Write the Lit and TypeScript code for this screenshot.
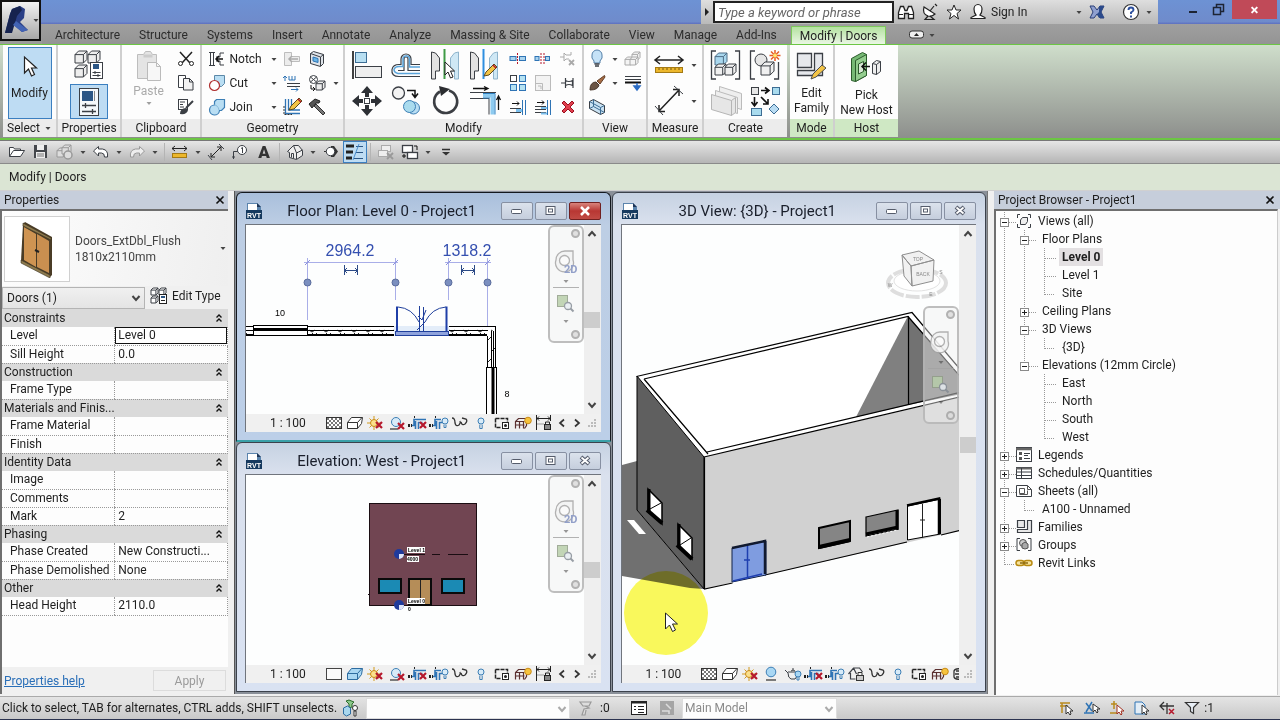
import { LitElement, html, svg, css, nothing } from "lit";
import { customElement, property } from "lit/decorators.js";
import { classMap } from "lit/directives/class-map.js";

/* ---------- icon set ---------- */

const K = "#3b3f45";
const B = "#2f74b5";
const L = "#b9def3";

const redX = (x: number, y: number) => svg`<path d="M${x} ${y}l6 6m0-6l-6 6" stroke="#b5182c" stroke-width="2.2" fill="none"/>`;
const pencil = (x: number, y: number) =>
  svg`<path d="M${x} ${y + 12}l2-4 8-8 3 3-8 8z" fill="#f3c445" stroke="#5a4a20" stroke-width="1"/><path d="M${x + 9} ${y + 1}l3 3" stroke="#b5182c" stroke-width="1.5"/>`;
const cube = (x: number, y: number, s: number, f: string, c = K) =>
  svg`<path d="M${x} ${y + s * 0.3}l${s * 0.3} ${-s * 0.3}h${s * 0.7}v${s * 0.7}l${-s * 0.3} ${s * 0.3}h${-s * 0.7}z" fill=${f} stroke=${c}/><path d="M${x} ${y + s * 0.3}h${s * 0.7}v${s * 0.7}m0 ${-s * 0.7}l${s * 0.3} ${-s * 0.3}" fill="none" stroke=${c}/>`;

const ICONS: Record<string, [number, number, unknown]> = {
  cursor: [14, 22, svg`<path d="M1.500 1v16l4-4 3 7 3-1.500-3-6.500h5z" fill="#fff" stroke="#222" stroke-width="1.200"/>`],
  typeProps: [32, 30, svg`${cube(2, 1, 12, "#eee")}${cube(15, 1, 12, "#eee")}${cube(2, 15, 12, "#eee")}<rect x="17.500" y="12.500" width="12" height="16" fill="#fff" stroke=${K}/><rect x="20" y="14" width="6" height="5" fill="#2c5685"/><path d="M19.500 22.500h8M19.500 25.500h8M22 21v3M25 24v3" stroke=${K}/>`],
  props: [22, 30, svg`<rect x="1.500" y="1.500" width="19" height="27" fill="#f5f8fb" stroke=${K}/><rect x="4" y="4" width="11" height="10" fill="#2c5685"/><path d="M16.500 4v10" stroke="#888"/><path d="M4 18.500h14M4 24.500h14M7.500 16v5M14.500 22v5" stroke=${K} stroke-width="1.300"/>`],
  paste: [28, 32, svg`<path d="M2.500 4.500h6l2-3h5l2 3h4v24h-19z" fill="#e4e4e4" stroke="#bdbdbd"/><path d="M8.500 4.500h9v3h-9z" fill="#ccc"/><path d="M12.500 12.500h9l4 4v14h-13z" fill="#f7f7f7" stroke="#bbb"/><path d="M21.500 12.500v4h4" fill="none" stroke="#bbb"/>`],
  cut: [18, 16, svg`<path d="M3 1l10 11M15 1L5 12" stroke="#222" stroke-width="1.500"/><circle cx="3.500" cy="12.500" r="2" fill="#fff" stroke="#222"/><circle cx="14.500" cy="12.500" r="2" fill="#fff" stroke="#222"/>`],
  copy: [18, 16, svg`<path d="M1.500.5h7v12h-7z" fill="#fff" stroke=${K}/><path d="M6.500 3.500h6l3.500 3.500v8h-9.500z" fill="#f2f2f2" stroke=${K}/><path d="M12.500 3.500v3.500h3.500" fill="none" stroke=${K}/>`],
  matchType: [18, 16, svg`<rect x="1.500" y=".5" width="9" height="10" fill="#fff" stroke=${K}/><path d="M3 3h5M3 5.500h3M3 8h4" stroke=${K}/><path d="M16 2L9 9" stroke=${K} stroke-width="2"/><path d="M3 15q0-6 6-6l2 2q-1 5-8 4z" fill=${K}/>`],
  notch: [18, 16, svg`<path d="M1 1.500h6M1 14.500h6M2.500 2v12M5.500 2v12" stroke=${K} fill="none"/><path d="M16 2h-4v4H8m0 4h4v4h4" stroke=${K} fill="none"/><path d="M15 8H8m3-3L8 8l3 3" stroke="#111" stroke-width="1.500" fill="none"/>`],
  cutGeo: [18, 18, svg`<path d="M6.500 1.500h10v8l-3 3h-7z" fill=${L} stroke="#5b88a8"/><circle cx="6.500" cy="11.500" r="5" fill="#fff" stroke="#b03030" stroke-width="1.200"/>`],
  join: [18, 18, svg`<path d="M6.500 3.500l2-2h8v8l-3 3h-2a5 5 0 1 1-5-5.500z" fill=${L} stroke="#3d7fb5" stroke-width="1.200"/><path d="M11 12q-1-5-5-5" stroke="#8bbbd9" fill="none"/>`],
  cope: [18, 16, svg`<path d="M1.500 1.500h7v4h8v5h-8v4h-7z" fill="#ececec" stroke="#bdbdbd"/><path d="M15 8H6m3-3L6 8l3 3" stroke="#aaa" fill="none" stroke-width="1.500"/>`],
  face: [18, 16, svg`<path d="M2.500 2.500l3-2 10 3v9l-3 3-10-3z" fill="#dfe4ea" stroke=${K}/><path d="M12.500 6v9M2.500 2.500l10 3.500 3-2.500" fill="none" stroke=${K}/><path d="M5 6l5 1.500v4L5 10z" fill="#69b5e6" stroke=${B}/>`],
  beam: [18, 16, svg`<path d="M2 1v5M0 3l2-2 2 2" stroke=${B} fill="none"/><path d="M6 1v4h6V1M9 1v4" stroke=${B} fill="none"/><path d="M4 8.500h13M4 11.500h13" stroke=${K}/><path d="M8 14.500h7m-2-2l2 2-2 2" stroke=${B} fill="none"/>`],
  split: [18, 16, svg`<circle cx="5.500" cy="4.500" r="4" fill="#fff" stroke=${K}/><path d="M2.500 2l6 5m0-5l-6 5" stroke=${K}/><path d="M3 10v4h4m-2-2l2 2-2 2" stroke="#111" fill="none"/>${cube(8, 6, 9, "#eee")}`],
  wallJoin: [18, 18, svg`<path d="M2.500 1v14.500H17M5.500 1v11H17M8.500 1v8" stroke=${B} fill="none" stroke-width="1.300"/><path d="M1 8v8.500h8" stroke="#333" fill="none" stroke-dasharray="2 1"/>${pencil(6, 0)}`],
  hammer: [18, 18, svg`<path d="M8 6l9 9-2 2-9-9z" fill="#777" stroke="#333"/><path d="M1 6l6-5 5 2-1 2-3 0-4 5z" fill="#555" stroke="#222"/>`],
  align: [30, 30, svg`<path d="M1 1v28" stroke="#111" stroke-width="1.600"/><rect x="3.500" y="2.500" width="11" height="10" fill="#b8dff2" stroke="#3d6d94"/><rect x="3.500" y="16.500" width="26" height="11" fill="#eee" stroke=${K}/>`],
  offset: [32, 28, svg`<path d="M30 25.500H9q-8 0-7-7 1-5 7-5h2V8a5 5 0 0 1 10 0v5.500h9" fill="none" stroke=${K} stroke-width="1.200"/><path d="M30 19.500H18V8a2 2 0 0 0-4 0v11.500H8" fill="none" stroke=${K} stroke-width="1.200"/><path d="M30 22.500H8q-4-1-4-4 1-3 5-3h4V7a3.500 3.500 0 0 1 6.500 0v9H30" fill="none" stroke="#5aa4da" stroke-width="1.500"/>`],
  mirrorPick: [30, 32, svg`<path d="M1.500 3l4 1 4 5v13h-4v8h-4z" fill="#e2e2e2" stroke=${K}/><path d="M28.500 3l-4 1-4 5v13h4v8h4z" fill="#cfe8f5" stroke="#8fb4cc"/><path d="M14.500 0v30" stroke="#3f9b46" stroke-width="2"/><path d="M15 13v13l3-3 2.500 6 2.500-1-2.500-6h4z" fill="#fff" stroke="#222"/>`],
  mirrorDraw: [30, 32, svg`<path d="M1.500 3l4 1 4 5v13h-4v8h-4z" fill="#e2e2e2" stroke=${K}/><path d="M28.500 3l-4 1-4 5v13h4v8h4z" fill="#cfe8f5" stroke="#8fb4cc"/><path d="M14.500 0v30" stroke="#2f8fe0" stroke-width="2"/>${pencil(15, 15)}`],
  move: [30, 30, svg`<path d="M15 0l6 7h-4v4h-4V7H9zM15 30l6-7h-4v-4h-4v4H9zM0 15l7-6v4h4v4H7v4zM30 15l-7-6v4h-4v4h4v4z" fill="#2e3136"/><rect x="12.500" y="12.500" width="5" height="5" fill="#fff" stroke=${K}/>`],
  copyObj: [30, 30, svg`<circle cx="7.500" cy="7" r="6" fill="#f3f3f3" stroke=${K} stroke-width="1.300"/><path d="M16 4.500h8v6m-3-3l3 4 3-4" stroke="#111" stroke-width="1.500" fill="none"/><circle cx="22.500" cy="22" r="6" fill=${L} stroke="#3d7fb5"/><circle cx="18.500" cy="20.500" r="6" fill="#a9dbee" stroke="#3d7fb5"/>`],
  rotate: [30, 30, svg`<path d="M10 5.500a11.500 11.500 0 1 0 9-1" fill="none" stroke="#3b3e43" stroke-width="2.600"/><path d="M9 0l11 3-9 7z" fill="#2b2d30"/>`],
  trim: [30, 30, svg`<path d="M1 6.500h26M1 12.500h19v16" fill="none" stroke=${K}/><path d="M14 9.500h9.500v19" fill="none" stroke="#8ecbf0" stroke-width="4"/><path d="M14 7.500h12v21M14 12h7" stroke="#2f82c4" fill="none"/><path d="M4 2.500h14m-3-2l4 2-4 2M29.500 24V11m-2 3l2-4 2 4" stroke="#111" fill="none" stroke-width="1.300"/>`],
  splitEl: [18, 12, svg`<rect x="1" y="3.500" width="6" height="4" fill="#a9d3ee" stroke=${B}/><rect x="10.500" y="3.500" width="6" height="4" fill="#a9d3ee" stroke=${B}/><path d="M8.500 0v12" stroke="#b5182c" stroke-dasharray="2 1"/>`],
  splitGap: [18, 12, svg`<rect x="1" y="3.500" width="4" height="4" fill="#a9d3ee" stroke=${B}/><rect x="11.500" y="3.500" width="4" height="4" fill="#a9d3ee" stroke=${B}/><path d="M7 0v12M10 0v12" stroke="#b5182c" stroke-dasharray="2 1"/>`],
  unpin: [18, 16, svg`<path d="M1 6h4V2l2 2h5V1M5 6v4l2-2h3" stroke="#aaa" fill="none"/><path d="M10 9l5 5m0-5l-5 5" stroke="#aaa" stroke-width="1.800"/>`],
  array: [18, 18, svg`<rect x="1.500" y="1.500" width="6" height="6" fill="#fff" stroke=${K}/><rect x="10.500" y="1.500" width="6" height="6" fill="#b5e2f2" stroke=${B}/><rect x="1.500" y="10.500" width="6" height="6" fill="#b5e2f2" stroke=${B}/><rect x="10.500" y="10.500" width="6" height="6" fill="#b5e2f2" stroke=${B}/>`],
  scale: [18, 18, svg`<rect x="1.500" y="1.500" width="15" height="15" fill="#f3f3f3" stroke="#bbb"/><path d="M1.500 9.500h7v7M4 12h3v3" fill="none" stroke="#bbb"/>`],
  pin: [16, 12, svg`<path d="M1 6h4.500M5.500 1v10M5.500 3.500q3.500 2 7 0v5q-3.500-2-7 0M13 1v10" stroke=${K} fill="none" stroke-width="1.200"/>`],
  trimOne: [18, 16, svg`<path d="M1 9.500h11M1 13.500h11" stroke=${K}/><path d="M7 11.500h6" stroke="#7cc0ee" stroke-width="3"/><path d="M13.500 1v15M16.500 1v15" stroke=${B}/><path d="M3 4.500h7m-2-2l2 2-2 2" stroke="#111" fill="none"/>`],
  trimMany: [18, 16, svg`<path d="M1 7.500h11M1 10.500h11M1 13.500h11" stroke=${K}/><path d="M7 9h6M7 14.500h6" stroke="#7cc0ee" stroke-width="2"/><path d="M13.500 1v15M16.500 1v15" stroke=${B}/><path d="M3 3.500h7m-2-2l2 2-2 2" stroke="#111" fill="none"/>`],
  del: [16, 16, svg`<path d="M2 4l2-2 4 4 4-4 2 2-4 4 4 4-2 2-4-4-4 4-2-2 4-4z" fill="#e0404f" stroke="#9c1020"/>`],
  bulb: [14, 18, svg`<path d="M4 11q-3-3-2-6a5 5 0 0 1 10 0q1 3-2 6v2H4z" fill="#c5e2f7" stroke="#5580a8"/><path d="M4.500 14h5M5 16h4" stroke=${K} stroke-width="1.400"/>`],
  ghost: [18, 16, svg`${cube(1, 6, 8, "#f4f4f4", "#aaa")}${cube(8, 1, 8, "#f4f4f4", "#aaa")}${cube(6, 6, 8, "#f4f4f4", "#aaa")}`],
  brush: [18, 16, svg`<path d="M16.500.5L9 6l3 3 5-7z" fill="#a86c43" stroke="#63402a"/><path d="M2 15q0-8 6-8l3 3q-1 5-9 5z" fill="#6b5444" stroke="#4a372c"/>`],
  linework: [18, 16, svg`<path d="M1 1.500h16M1 4.500h16" stroke=${K} stroke-width="1.200"/><path d="M1 7.500h16" stroke="#111" stroke-width="2"/><path d="M13 8v5m-3-2l3 4 3-4z" fill="#2b6cc4" stroke="#2b6cc4" stroke-width="1.500"/>`],
  selBox: [18, 18, svg`<path d="M1.500 3.500l4-2 11 6v7l-4 2-11-6z" fill="#c9e2f3" stroke=${K}/><path d="M1.500 3.500l11 6v7M12.500 9.500l4-2M5.500 1.500v7l11 6M5.500 8.500l-4 2" fill="none" stroke="#3d6d94"/>`],
  measure: [30, 20, svg`<path d="M1 5h28M6 1L1 5l5 4M24 1l5 4-5 4" stroke="#222" fill="none" stroke-width="1.500"/><rect x="1.500" y="12.500" width="27" height="5" fill="#ecb72c" stroke="#a47a14"/><path d="M5 13v2M9 13v2M13 13v2M17 13v2M21 13v2M25 13v2" stroke="#76570f"/>`],
  aligned: [30, 32, svg`<path d="M5 26L25 5M5 20v6.500h6M25 11V4.500h-6" stroke="#222" fill="none" stroke-width="1.500"/><path d="M1 21l8 9M20 1l9 8" stroke=${K}/>`],
  assembly: [32, 30, svg`<path d="M6 1H1.500v28H6M25 1h4.500v28H25" fill="none" stroke=${K} stroke-width="1.300"/>${cube(5, 3, 12, "#a9d7ee", "#4f6f88")}${cube(5, 14, 11, "#f0f0f0")}${cube(15, 14, 11, "#f0f0f0")}`],
  group: [32, 30, svg`<path d="M6 1H1.500v28H6M25 29h4.500V12" fill="none" stroke=${K} stroke-width="1.300"/><circle cx="12" cy="10" r="6" fill="#e6e6e6" stroke=${K}/>${cube(12, 12, 13, "#f0f0f0")}<path d="M26 0v11M20.500 5.500h11M22 1.500l8 8m0-8l-8 8" stroke="#e85c24" stroke-width="1.500"/><circle cx="26" cy="5.500" r="2" fill="#ffe36b"/>`],
  parts: [32, 32, svg`<path d="M9.500 1.500l22 7v16l-22-7z" fill="#eee" stroke="#bbb"/><path d="M5.500 5.500l22 7v16l-22-7z" fill="#eee" stroke="#bbb"/><path d="M1.500 9.500l20 6 4-3v15l-4 3-20-6z" fill="#e6e6e6" stroke="#b5b5b5"/><path d="M21.500 15.500v15" stroke="#b5b5b5"/>`],
  similar: [30, 32, svg`<rect x="1.500" y="2.500" width="7" height="7" fill="#e6e6e6" stroke=${K}/><rect x="22.500" y="2.500" width="7" height="7" fill="#a9dbee" stroke="#3d6d94"/><rect x="1.500" y="23.500" width="10" height="7" fill="#a9dbee" stroke="#3d6d94"/><path d="M24 19l5 5-5 5-5-5z" fill="#b9dcf3" stroke="#3d6d94"/><path d="M11 5.500h7m-3-3l4 3-4 3M4.500 12v8m-3-3l3 4 3-4M11 12l7 7m0-5v5h-5" stroke="#111" fill="none" stroke-width="1.600"/>`],
  editFamily: [32, 30, svg`<path d="M1.500 2.500h14v14h-14zM18.500 2.500h8v22h-25v-5h17z" fill="#e6e8ec" stroke=${K} stroke-width="1.300"/><path d="M15 28l2-5 9-9 4 3-10 9z" fill="#f3c445" stroke="#4f4f4f"/>`],
  pickHost: [32, 32, svg`<path d="M1.500 7.500l11-6 4 2v21l-11 6-4-1z" fill="#76b974" stroke="#2c5c2c"/><path d="M5.500 9.500l11-6v21l-11 6z" fill="#93cd8e" stroke="#2c5c2c"/><path d="M8.500 13l5-2.500v10L8.500 23z" fill="#d9e8d6" stroke="#2c5c2c"/><path d="M20 15.500h-8m4-4l-4 4 4 4" stroke="#111" stroke-width="1.500" fill="none"/><path d="M22.500 12.500l4-3 4 1v10l-4 3-4-1z" fill="#eee" stroke=${K}/><path d="M26.500 13.500v10m0-10l4-3m-4 3l-4-1" stroke=${K} fill="none"/>`],
  open: [18, 14, svg`<path d="M1.500 11.500v-9h4l1 1.500h6v2" fill="#fff" stroke=${K}/><path d="M1.500 11.500l4-6h11l-4 6z" fill="#fff" stroke=${K}/>`],
  save: [16, 16, svg`<rect x="1" y="1" width="13" height="13" fill="#44474c"/><rect x="4" y="1" width="7" height="5" fill="#eee"/><rect x="3" y="8" width="9" height="6" fill="#eee"/><path d="M4 10h7M4 12h7" stroke="#777"/>`],
  sync: [18, 16, svg`${cube(1, 4, 9, "#ddd", "#999")}${cube(6, 1, 9, "#ddd", "#999")}<circle cx="12" cy="11" r="4" fill="#ddd" stroke="#999" stroke-width="1.500"/>`],
  undo: [18, 14, svg`<path d="M1.500 6l5-4.500v2.500h4q6 1 5 8h-3q0-4-3-4h-3v3z" fill="#fff" stroke=${K}/>`],
  redo: [18, 14, svg`<path d="M16.500 6l-5-4.500v2.500h-4q-6 1-5 8h3q0-4 3-4h3v3z" fill="#eee" stroke="#999"/>`],
  measureS: [18, 14, svg`<path d="M1 3.500h15M4 1L1 3.500 4 6M13 1l3 2.500L13 6" stroke="#222" fill="none"/><rect x="1.500" y="8.500" width="14" height="4" fill="#ecb72c" stroke="#a47a14"/>`],
  alignedS: [18, 16, svg`<path d="M4 13L14 3M4 9v4h4M14 7V3h-4" stroke="#222" fill="none"/><path d="M1 11l4 5M12 0l5 5" stroke=${K}/>`],
  tag: [18, 16, svg`<path d="M2.500 15V7.500h5M1 13h3" stroke=${K} fill="none"/><circle cx="11" cy="6" r="4.500" fill="#fff" stroke=${K}/><path d="M10 4.500l1.500-1v5.500" stroke=${K} fill="none"/>`],
  house: [18, 16, svg`<path d="M1.500 7.500l6-6h5l4 5v5l-6 4-7-2v-5z" fill="#eee" stroke=${K}/><path d="M10.500 15V9l6-3M10.500 9l-3-7.500M5.500 13.500v-4h2v4.500" fill="none" stroke=${K}/>`],
  section: [16, 14, svg`<path d="M8 1h3l4 5.500L11 12H8z" fill="#333"/><path d="M1 6.500h3" stroke="#333"/><circle cx="7.500" cy="6.500" r="4.200" fill="#fff" stroke=${K}/>`],
  thin: [20, 18, svg`<path d="M1 3h8M1 9h7M1 15h6" stroke="#222" stroke-width="3"/><path d="M11 3.500h7M11 9.500h7M9 15.500h9" stroke="#2c5685"/><path d="M14 1L8 17" stroke="#4a8fd0"/>`],
  closeHid: [18, 16, svg`<rect x="4.500" y="1.500" width="9" height="6" fill="#eee" stroke="#aaa"/><rect x="1.500" y="6.500" width="9" height="6" fill="#eee" stroke="#aaa"/><path d="M10 9l6 6m0-6l-6 6" stroke="#999" stroke-width="1.800"/>`],
  switchW: [18, 16, svg`<rect x="1.500" y="1.500" width="10" height="7" fill="#fff" stroke=${K} stroke-width="1.300"/><rect x="6.500" y="8.500" width="10" height="6" fill="#fff" stroke=${K} stroke-width="1.300"/><path d="M1 12h4m-2-2v4M13 2h3v4" stroke="#111" fill="none"/>`],
  binoc: [18, 16, svg`<path d="M1.500 14.500v-6l2-6h3l1.500 4h2l1.500-4h3l2 6v6h-5v-5h-4v5z" fill="#fff" stroke="#222" stroke-width="1.300"/><path d="M2 10.500h4M11 10.500h5" stroke="#222"/>`],
  dish: [16, 18, svg`<path d="M2 4q-2 7 4 9 4 1 7-2z" fill="#fff" stroke="#222" stroke-width="1.200"/><path d="M8 8l4-5m1-2l2 2M6 13l-3 3.500h9L8 13" fill="none" stroke="#222" stroke-width="1.200"/>`],
  star: [16, 16, svg`<path d="M8 1l2 5h5l-4 3.500 1.500 5.500L8 11.500 3.500 15 5 9.500 1 6h5z" fill="#fff" stroke="#222"/>`],
  person: [18, 18, svg`<path d="M5 6a4 4.500 0 0 1 8 0q0 4-2 6l5 2.500v1H2v-1L7 12Q5 10 5 6z" fill="#fff" stroke="#222" stroke-width="1.200"/>`],
  exch: [16, 16, svg`<path d="M1 2h4l3 4 3-4h4l-3 6 3 6h-4l-3-4-3 4H1l3-6z" fill="#8fa0d0" stroke="#2b3f78"/><path d="M10 2h5l-3 6 3 6h-5l-2-4 2-2z" fill="#2b4a8b"/>`],
  help: [18, 18, svg`<circle cx="9" cy="9" r="7.500" fill="#fff" stroke="#333" stroke-width="1.200"/><path d="M6.500 7q0-2.500 2.500-2.500T11.500 7Q11.500 8 9 9.500V11M9 12.500v2" stroke="#2c4f9e" stroke-width="1.900" fill="none"/>`],
  hatch: [18, 14, svg`<defs><pattern id="ck" width="4" height="4" patternUnits="userSpaceOnUse"><path d="M0 0h2v2H0zM2 2h2v2H2z" fill="#777"/></pattern></defs><rect x="1.500" y="1.500" width="15" height="11" fill="#fff"/><rect x="1.500" y="1.500" width="15" height="11" fill="url(#ck)" stroke="#333"/>`],
  blank: [18, 14, svg`<rect x="1.500" y="1.500" width="15" height="11" fill="#fafafa" stroke="#444"/>`],
  box: [18, 14, svg`<path d="M1.500 6.500l4-5h11l-1 6-4 5h-10z" fill="#fff" stroke="#333"/><path d="M1.500 6.500h10v6m0-6l4.500-5" fill="none" stroke="#333"/>`],
  boxBlue: [18, 14, svg`<path d="M1.500 6.500l4-5h11l-1 6-4 5h-10z" fill="#a9d7f3" stroke="#2d6ca0"/><path d="M1.500 6.500h10v6m0-6l4.500-5" fill="none" stroke="#2d6ca0"/>`],
  sun: [18, 14, svg`<path d="M7 0v14M0 7h13M2.500 2.500l9 9m0-9l-9 9" stroke="#d29a1d"/><circle cx="7" cy="7" r="3.500" fill="#fbe08b" stroke="#c98a18"/>${redX(9, 6)}`],
  shadowX: [18, 14, svg`<circle cx="8" cy="6" r="4.500" fill="#d8ebf8" stroke="#3d7fb5"/><path d="M2 13h8" stroke="#555" stroke-width="1.500"/>${redX(10, 7)}`],
  shadow: [18, 16, svg`<circle cx="8" cy="6" r="4.800" fill="#a9d7f3" stroke="#3d7fb5"/><path d="M3 14h10" stroke="#555" stroke-width="1.500"/>`],
  teapot: [18, 14, svg`<path d="M1 3l3 3q0 5 3 6h4q3-2 2-7H4M7 4q2-2 4 0M9 1v2" fill="none" stroke=${K}/><circle cx="14" cy="7" r="3" fill="#a9d7f3" stroke="#3d7fb5"/><path d="M13 10v3h2v-3" stroke="#3d7fb5" fill="none"/>`],
  cropX: [20, 14, svg`<path d="M3 9.500h3V3.500h12M10.500 13V6.500h4M7.500 13V5" stroke=${B} fill="none" stroke-width="1.600"/><path d="M0 8h2v3H0zM3 8h1v3H3zM6 0h1v2H6z" fill="#222"/>${redX(12, 6)}`],
  crop: [20, 14, svg`<path d="M3 9.500h3V3.500h6M10.500 13V6.500h3M7.500 13V5" stroke=${B} fill="none" stroke-width="1.600"/><path d="M0 8h2v3H0zM3 8h1v3H3zM6 0h1v2H6z" fill="#222"/><circle cx="16" cy="5" r="3" fill="#d8ebf8" stroke="#3d7fb5"/><path d="M15 8.500v3h2v-3" stroke="#3d7fb5" fill="none"/>`],
  lockHouse: [18, 16, svg`<path d="M1.500 8l5-6 6 0 3 4M3.500 7v6h5M6.500 2l3 6" stroke=${K} fill="none" stroke-width="1.200"/><rect x="9.500" y="9.500" width="7" height="5" fill="#ccc" stroke="#333"/><path d="M11 9V6.500h4V9" fill="none" stroke="#333"/>`],
  glasses: [18, 14, svg`<path d="M1 2q3 0 3 5 1 4 4 2 2-2 1-4M10 6q1 4 4 2 3-3 1-5l-4-1" fill="none" stroke="#333" stroke-width="1.300"/>`],
  bulbS: [12, 14, svg`<circle cx="6" cy="5" r="3" fill="#d8ebf8" stroke="#3d7fb5"/><path d="M4.800 8.500v4h2.400v-4" stroke="#3d7fb5" fill="none"/>`],
  frame: [18, 14, svg`<path d="M2.500 2.500h12v4M2.500 2.500v9h5" stroke="#222" fill="none" stroke-width="1.500" stroke-dasharray="4 1"/><rect x="9.500" y="6.500" width="6" height="6" fill="#fff" stroke="#222"/><circle cx="12.500" cy="9.500" r="1.500" fill="#222"/>`],
  gridSun: [18, 14, svg`<path d="M1.500 12.500V5.500l3-3h8v7l-2 3M5.500 12.500V5.500M9.500 12.500V5.500M1.500 5.500h9M1.500 9h9" stroke="#5a3030" fill="none" stroke-width="1.200"/><circle cx="14" cy="4.500" r="3.300" fill="#f6c33c" stroke="#c98a18"/>`],
  dimLock: [18, 16, svg`<path d="M1.500 0v15M15.500 0v6M2 3.500h13M4 1.500l-2 2 2 2M13 1.500l2 2-2 2" stroke="#222" fill="none"/><path d="M2 9h7" stroke="#999"/><rect x="9.500" y="9.500" width="6" height="5" fill="#888" stroke="#222"/><path d="M10.500 9V7h4v2" fill="none" stroke="#222"/>`],
  partial: [18, 14, svg`<path d="M9 2q-6-1-7 2v6q1 3 7 2M3 7h6M4 4h5M4 10h5" fill="none" stroke="#333" stroke-width="1.300"/>`],
  rvt: [18, 18, svg`<path d="M2 1h10l4 4v12H2z" fill="#5b84ad"/><path d="M3 2h9v6H3z" fill="#fff"/><path d="M12 1v4h4z" fill="#1d3557"/><rect x="1" y="8" width="16" height="9" fill="#163a5f"/><text x="9" y="15.500" text-anchor="middle" font-size="7" font-weight="700" font-family="Liberation Sans" fill="#fff">RVT</text>`],
  min: [14, 12, svg`<rect x="1.500" y="4.500" width="10" height="4" rx="1" fill="#fff" stroke="#555c6b"/>`],
  max: [14, 12, svg`<rect x="2" y="1.500" width="9" height="8" fill="#fff" stroke="#555c6b"/><rect x="4.500" y="4" width="4" height="3" fill="#fff" stroke="#555c6b"/>`],
  closeW: [14, 12, svg`<path d="M3 2l8 7m0-7l-8 7" stroke="#555c6b" stroke-width="4"/><path d="M3.500 2.500l7 6m0-6l-7 6" stroke="#fff" stroke-width="1.800"/>`],
  closeRed: [14, 12, svg`<path d="M3 2l8 8m0-8l-8 8" stroke="#fff" stroke-width="2.500"/>`],
  wheel: [24, 24, svg`<path d="M2 10a9 9 0 0 1 9-9h8v9a9 9 0 1 1-17 0z" fill="#f3f3f3" stroke="#a9a9a9" stroke-width="1.300"/><circle cx="10.500" cy="10.500" r="5" fill="#fafafa" stroke="#a9a9a9" stroke-width="1.300"/>`],
  zoomR: [20, 20, svg`<rect x="1.500" y="1.500" width="10" height="11" fill="#bcd1af" stroke="#98a48f"/><circle cx="12" cy="12" r="3.500" fill="#e9eef2" stroke="#8d949c" stroke-width="1.300"/><path d="M14.500 14.500l3 3" stroke="#8d949c" stroke-width="2"/>`],
  views: [18, 16, svg`<path d="M5 1.500H2.500V5M13 1.500h2.500V5M5 14.500H2.500V11M13 14.500h2.500V11" fill="none" stroke=${K}/><path d="M5.500 7l2-2.500h5v4l-2 3h-5z" fill="#eee" stroke=${K}/>`],
  legend: [18, 16, svg`<rect x="1.500" y=".5" width="15" height="14" fill="#fff" stroke=${K}/><path d="M1 2h16" stroke="#666" stroke-width="2.500"/><path d="M4 5h3v3H4zM4 10h3v3H4z" fill="#555"/><path d="M9 6.500h6M9 8.500h4M9 11.500h6" stroke=${K}/>`],
  sched: [18, 14, svg`<rect x="1.500" y="1.500" width="15" height="11" fill="#fff" stroke=${K}/><path d="M1 2.500h16" stroke="#666" stroke-width="2"/><path d="M2 6h15M2 9.500h15M6.500 2v11" stroke=${K}/>`],
  sheet: [18, 14, svg`<path d="M1.500 1.500h11l4 4v7h-15z" fill="#fff" stroke=${K}/><path d="M12.500 1.500v4h4M4.500 4.500h5v5h-5zM4.500 10.500h8v-4" fill="none" stroke="#555"/>`],
  fam: [18, 16, svg`<path d="M2.500 1.500h7v7h-7zM12.500 1.500h4v12h-14v-3h10z" fill="#e8e8e8" stroke=${K} stroke-width="1.200"/>`],
  grp: [18, 16, svg`<path d="M5 1.500H2v12h3M13 1.500h3v12h-3" fill="none" stroke=${K}/><circle cx="8" cy="6" r="3.500" fill="#ccc" stroke="#555"/><path d="M7 7l3-2 3 2v4l-3 1-3-1z" fill="#aaa" stroke="#555"/>`],
  link: [18, 10, svg`<rect x="1" y="2.500" width="8" height="5" rx="2.500" fill="#f7e29a" stroke="#b88a12" stroke-width="1.500"/><rect x="9" y="2.500" width="8" height="5" rx="2.500" fill="#f7e29a" stroke="#b88a12" stroke-width="1.500"/><path d="M5 5h8" stroke="#8c6a10" stroke-width="1.500"/>`],
  editType: [18, 18, svg`${cube(1, 1, 7, "#fff")}${cube(9, 1, 7, "#fff")}${cube(1, 9, 7, "#fff")}<rect x="9.500" y="7.500" width="7" height="9" fill="#fff" stroke="#222"/><rect x="11" y="9" width="4" height="2" fill="#2c5685"/><path d="M11 13.500h4" stroke="#222"/>`],
  workset: [18, 18, svg`<path d="M4 2l3-1 5 2-2 2v3l-3 1V5z" fill="#8cc98a" stroke="#2c6b2c"/><path d="M1.500 9l4-2 3 2v6l-4 2-3-2z" fill="#a9d7ee" stroke="#2d6ca0"/><circle cx="13" cy="9" r="2.500" fill="#fff" stroke="#333"/><path d="M12 12h2v5h-2z" fill="#fff" stroke="#333"/>`],
  editable: [18, 18, svg`<path d="M4 3h11l-2 4H7zM9 7l4 2-5 1-2 6h3l1-5" fill="#ddd" stroke="#999" stroke-width="1.200"/>`],
  optList: [18, 16, svg`<rect x="1.500" y="1.500" width="15" height="13" fill="#fff" stroke="#222"/><path d="M1 2.500h16" stroke="#222" stroke-width="2"/><path d="M4 6.500h2M4 9.500h2M8 6.500h6M8 9.500h6M8 12.500h6" stroke="#222"/>`],
  optGray: [16, 16, svg`<rect x="1" y="1" width="14" height="14" fill="#a5a5a5"/><path d="M3 11h7v3M7 4l5 5" stroke="#ddd" stroke-width="1.500" fill="none"/>`],
  selA: [18, 16, svg`<path d="M2 3h10M2 6h8M4 3v10" stroke="#b98a1c" stroke-width="1.500"/><path d="M8 5v9l2-2 2 3 1-1-1-3h3z" fill="#fff" stroke="#333"/>`],
  selB: [18, 16, svg`<path d="M1 13h10M3 3l6 8M9 2L3 12" stroke=${B} stroke-width="1.500"/><path d="M10 4v8l2-2 2 3 1-1-1-3h3z" fill="#fff" stroke="#333"/>`],
  selC: [18, 16, svg`<path d="M6 1v8M3 4h6M2 13h8" stroke="#b98a1c" stroke-width="1.500"/><path d="M9 5v9l2-2 2 3 1-1-1-3h3z" fill="#fff" stroke="#a03020"/>`],
  selD: [18, 16, svg`<path d="M2 2h7l3 3v9H2z" fill="#e3edf6" stroke=${B}/><path d="M9 5v9l2-2 2 3 1-1-1-3h3z" fill="#fff" stroke="#333"/>`],
  selE: [18, 16, svg`<path d="M2 6h14M6 2l-4 4 4 4M9 3v11" stroke="#333" stroke-width="1.300" fill="none"/><path d="M11 9l5 5m0-5l-5 5" stroke="#b5182c" stroke-width="1.500"/>`],
  filter: [16, 14, svg`<path d="M1.500 1.500h13l-5 5v6l-3-2v-4z" fill="#e8eef5" stroke="#333" stroke-width="1.200"/>`],
  restoreW: [14, 14, svg`<path d="M4.500 4V1.500h7v7H9M1.500 4.500h7v7h-7zM1 4.500h8" fill="none" stroke="#1d2434" stroke-width="1.500"/>`],
  logo: [30, 34, svg`<path d="M3 29L8 10 10 5l8-3 5 3-1 9-4 4 8 8-6 2-9-8-1 7z" fill="#2a3f86"/><path d="M8 10l2-5 8-3 2 4-5 6-5 17-7 0z" fill="#16234f"/><path d="M14 17l12 9-6 2-9-7z" fill="#4263b4"/>`],
  collapse: [8, 10, svg`<path d="M1.500 4.500L4 2l2.500 2.500M1.500 8.500L4 6l2.500 2.500" fill="none" stroke="#111" stroke-width="1.400"/>`],
  x: [10, 10, svg`<path d="M1.500 1.500l7 7m0-7l-7 7" stroke="#111" stroke-width="1.600"/>`],
  up: [10, 8, svg`<path d="M1.500 6L5 2l3.500 4" fill="none" stroke="#444" stroke-width="2"/>`],
  down: [10, 8, svg`<path d="M1.500 2L5 6l3.500-4" fill="none" stroke="#444" stroke-width="2"/>`],
  left: [8, 10, svg`<path d="M6 1.500L2 5l4 3.500" fill="none" stroke="#333" stroke-width="1.700"/>`],
  right: [8, 10, svg`<path d="M2 1.500L6 5 2 8.500" fill="none" stroke="#333" stroke-width="1.700"/>`],
  tri: [8, 5, svg`<path d="M1.500 1h5L4 4z" fill="#444"/>`],
  triR: [6, 10, svg`<path d="M1 1l4 4-4 4z" fill="#222"/>`],
  custom: [10, 8, svg`<path d="M1 1.500h8" stroke="#333" stroke-width="1.500"/><path d="M1 4h8L5 7.500z" fill="#333"/>`],
  pill: [18, 10, svg`<rect x="1.500" y="1" width="14" height="7" rx="2.500" fill="#eee" stroke="#333"/><path d="M6 6h5L8.500 3z" fill="#222"/>`],
  grip: [10, 10, svg`<path d="M7 1h2v2H7zM4 4h2v2H4zM7 4h2v2H7zM1 7h2v2H1zM4 7h2v2H4zM7 7h2v2H7z" fill="#bbb"/>`],
};

const icon = (name: string) => {
  const [w, h, body] = ICONS[name];
  return html`<svg class="ic" width=${w} height=${h} viewBox="0 0 ${w} ${h}" aria-hidden="true">${body}</svg>`;
};

const base = css`
  * { box-sizing: border-box; }
  :host { font-family: Roboto, "Open Sans", sans-serif; font-size: 12px; color: #1e1e1e; }
  button { font: inherit; color: inherit; background: none; border: 0; padding: 0; margin: 0; display: flex; align-items: center; justify-content: center; }
  .ic { display: block; flex: none; overflow: visible; }
`;

/* ---------- navigation bar that floats over a view ---------- */

@customElement("nav-bar")
class NavBar extends LitElement {
  @property({ type: Boolean }) flat = false;
  static styles = [base, css`
    .nav { width: 36px; height: 118px; border: 2px solid #b8b8b8; border-radius: 6px; background: rgba(240, 240, 240, .5); display: flex; flex-direction: column; align-items: center; opacity: .9; }
    .dot { width: 9px; height: 9px; border: 2px solid #aaa; border-radius: 50%; align-self: flex-end; margin: 2px; flex: none; background: #ddd; }
    .wheel { height: 28px; margin-top: 8px; display: grid; }
    .wheel .ic, .two { grid-area: 1 / 1; }
    .two { align-self: end; justify-self: end; color: #8796c4; font-size: 11px; line-height: 12px; font-weight: 700; z-index: 1; }
    .arrow { height: 11px; opacity: .6; }
    .zoom { height: 24px; margin-top: 4px; }
    hr { width: 26px; border: 0; border-top: 1px solid #aaa; margin: 0; }
    .last { margin-top: auto; }
  `];
  render() {
    return html`<div class="nav">
      <button class="dot" aria-label="Close"></button>
      <button class="wheel" aria-label="Steering wheel">${icon("wheel")}${this.flat ? html`<span class="two">2D</span>` : nothing}</button>
      <button class="arrow" aria-label="Wheel options">${icon("tri")}</button>
      <hr />
      <button class="zoom" aria-label="Zoom region">${icon("zoomR")}</button>
      <button class="arrow" aria-label="Zoom options">${icon("tri")}</button>
      <button class="dot last" aria-label="Customize"></button>
    </div>`;
  }
}

/* ---------- a document window ---------- */

@customElement("doc-window")
class DocWindow extends LitElement {
  @property() heading = "";
  @property({ type: Boolean }) active = false;
  @property({ attribute: false }) tools: string[] = [];
  @property({ type: Boolean }) steps = false;
  static styles = [base, css`
    :host { display: flex; min-width: 0; min-height: 0; }
    .win { flex: 1; min-width: 0; display: flex; flex-direction: column; padding: 0 9px 8px 8px; border: 1px solid #3c424c; border-radius: 6px 6px 0 0; background: linear-gradient(#c6d2e2, #dae1ee 32px, #d9e2f2); }
    .win.active { background: linear-gradient(#a9bfdc, #bdcee4 32px, #bccfe8); border-color: #14181f; border-bottom: 2px solid #3aa0a8; }
    .bar { height: 31px; flex: none; display: flex; align-items: center; padding-top: 5px; gap: 2px; }
    .title { flex: 1; text-align: center; font-size: 15px; color: #1a1f2b; white-space: nowrap; overflow: hidden; }
    .ctl { width: 32px; height: 18px; border: 1px solid #8790a2; border-radius: 2px; background: linear-gradient(#dbe2ec, #c5cedd); }
    .active .shut { background: linear-gradient(#d8847c, #b83733 50%, #c04a44); border-color: #702020; }
    .client { flex: 1; min-height: 0; display: grid; grid-template-columns: 1fr 17px; grid-template-rows: 1fr 18px; border-top: 1px solid #70757d; border-left: 1px solid #70757d; background: #f0f0f0; }
    .canvas { position: relative; overflow: hidden; background: #fdfefe; min-width: 0; min-height: 0; }
    .scroll { display: flex; flex-direction: column; align-items: center; justify-content: space-between; background: #efefef; }
    .scroll button { height: 18px; width: 100%; }
    .thumb { width: 16px; height: 16px; background: #cdcdcd; }
    .view { display: flex; align-items: center; overflow: hidden; min-width: 0; }
    .scale { width: 77px; flex: none; justify-content: flex-start; padding-left: 24px; white-space: nowrap; }
    .tool { width: 21px; height: 18px; flex: none; }
    .step { width: 15px; height: 18px; flex: none; }
    .corner { display: flex; align-items: center; justify-content: center; }
  `];
  render() {
    return html`<section class=${classMap({ win: true, active: this.active })}>
      <header class="bar">
        ${icon("rvt")}<span class="title">${this.heading}</span>
        <button class="ctl" aria-label="Minimize">${icon("min")}</button>
        <button class="ctl" aria-label="Maximize">${icon("max")}</button>
        <button class="ctl shut" aria-label="Close">${icon(this.active ? "closeRed" : "closeW")}</button>
      </header>
      <div class="client">
        <div class="canvas"><slot></slot></div>
        <div class="scroll">
          <button aria-label="Scroll up">${icon("up")}</button>
          <div class="thumb"></div>
          <button aria-label="Scroll down">${icon("down")}</button>
        </div>
        <div class="view">
          <button class="scale">1 : 100</button>
          ${this.tools.map((t) => html`<button class="tool" aria-label=${t}>${icon(t)}</button>`)}
          ${this.steps ? html`<button class="step" aria-label="Back">${icon("left")}</button><button class="step" aria-label="Forward">${icon("right")}</button>` : nothing}
        </div>
        <div class="corner">${icon("grip")}</div>
      </div>
    </section>`;
  }
}

/* ---------- properties palette ---------- */

const PROPS: [string, [string, string][]][] = [
  ["Constraints", [["Level", "Level 0"], ["Sill Height", "0.0"]]],
  ["Construction", [["Frame Type", ""]]],
  ["Materials and Finis...", [["Frame Material", ""], ["Finish", ""]]],
  ["Identity Data", [["Image", ""], ["Comments", ""], ["Mark", "2"]]],
  ["Phasing", [["Phase Created", "New Constructi..."], ["Phase Demolished", "None"]]],
  ["Other", [["Head Height", "2110.0"]]],
];

const panelTitle = css`
  .head { height: 18px; flex: none; display: flex; align-items: center; justify-content: space-between; padding: 0 1px 0 4px; background: #c6cedb; }
  .head button { width: 14px; height: 14px; }
`;

@customElement("properties-panel")
class PropertiesPanel extends LitElement {
  static styles = [base, panelTitle, css`
    :host { display: flex; flex-direction: column; min-height: 0; background: #f0f0f0; }
    .inner { flex: 1; display: flex; flex-direction: column; border-left: 2px solid #6f6f6f; border-top: 2px solid #6f6f6f; margin-bottom: 2px; min-height: 0; }
    .type { height: 75px; flex: none; display: flex; align-items: center; gap: 5px; justify-content: flex-start; padding: 0 1px 0 2px; text-align: left; background: linear-gradient(100deg, #fdfdfd, #efefef); color: #444; line-height: 16px; width: 100%; }
    .thumb { width: 66px; height: 66px; border: 1px solid #d0d0d0; background: #fff; display: flex; align-items: center; justify-content: center; }
    .name { flex: 1; }
    .pick { height: 23px; flex: none; display: flex; align-items: center; gap: 5px; }
    .kind { position: relative; width: 143px; height: 22px; display: flex; }
    .kind select { appearance: none; font: inherit; width: 100%; padding: 0 4px; border: 1px solid #b4b4b4; border-radius: 0; background: linear-gradient(#f0f0f0, #e4e4e4); color: #1e1e1e; }
    .kind .ic { position: absolute; right: 4px; top: 7px; pointer-events: none; }
    .edit { gap: 4px; margin-bottom: 4px; }
    .sheet { flex: 1; min-height: 0; background: #fdfdfd; overflow: hidden; }
    table { width: 100%; border-collapse: collapse; table-layout: fixed; }
    tr { height: 18px; }
    th, td { padding: 0; height: 18px; font-weight: 400; text-align: left; line-height: 17px; white-space: nowrap; }
    .group th { background: #dadada; padding-left: 2px; }
    .group div { display: flex; justify-content: space-between; align-items: center; padding-right: 5px; }
    .row th { padding-left: 8px; border-bottom: 1px dotted #999; }
    .row td { border: 1px dotted #999; border-top: 0; }
    input { font: inherit; color: inherit; display: block; width: 100%; height: 17px; border: 0; padding: 0 3px; background: none; }
    .focus input { border: 1px solid #111; padding: 0 2px; background: #fff; }
    .foot { height: 27px; flex: none; display: flex; align-items: center; justify-content: space-between; padding: 0 2px; }
    a { color: #2a6fb8; }
    .apply { width: 73px; height: 21px; border: 1px solid #dcdcdc; color: #9a9a9a; }
  `];
  render() {
    return html`
      <header class="head"><span>Properties</span><button aria-label="Close">${icon("x")}</button></header>
      <div class="inner">
        <button class="type">
          <span class="thumb"><svg width="34" height="58" viewBox="0 0 34 58" aria-hidden="true">
            <path d="M1 41L3 4l2-2 27 15v38l-2 2z" fill="#4a3c26"/><path d="M4 7l12 7v33L4 40z" fill="#cf9452"/><path d="M17 14l12 7v32l-12-6z" fill="#c98f50"/><path d="M3 3l28 15v2L3 6zM1 40l29 15v3L1 43z" fill="#8d7a4e" stroke="#3b3220" stroke-width=".6"/><path d="M15 30l4 2" stroke="#222" stroke-width="2"/></svg></span>
          <span class="name">Doors_ExtDbl_Flush<br />1810x2110mm</span>${icon("tri")}
        </button>
        <div class="pick">
          <label class="kind"><select aria-label="Category"><option>Doors (1)</option></select>${icon("down")}</label>
          <button class="edit">${icon("editType")}<span>Edit Type</span></button>
        </div>
        <div class="sheet"><table>
          ${PROPS.map(([g, rows]) => html`
            <tr class="group"><th colspan="2"><div>${g}${icon("collapse")}</div></th></tr>
            ${rows.map(([k, v]) => html`<tr class="row"><th scope="row">${k}</th><td class=${k === "Level" ? "focus" : ""}><input aria-label=${k} .value=${v} /></td></tr>`)}`)}
        </table></div>
        <footer class="foot"><a href="#help">Properties help</a><button class="apply" disabled>Apply</button></footer>
      </div>`;
  }
}

/* ---------- project browser ---------- */

/* cells: "|" guide, "t" tee, "l" last, "-"/"+" toggles, "_" last toggle, "." empty */
const TREE: [string, string, string?][] = [
  ["-", "Views (all)", "views"],
  ["|-", "Floor Plans"],
  ["||t", "Level 0", "bold"],
  ["||t", "Level 1"],
  ["||l", "Site"],
  ["|+", "Ceiling Plans"],
  ["|-", "3D Views"],
  ["||l", "{3D}"],
  ["|_", "Elevations (12mm Circle)"],
  ["|.t", "East"],
  ["|.t", "North"],
  ["|.t", "South"],
  ["|.l", "West"],
  ["+", "Legends", "legend"],
  ["+", "Schedules/Quantities", "sched"],
  ["-", "Sheets (all)", "sheet"],
  ["|l", "A100 - Unnamed"],
  ["+", "Families", "fam"],
  ["+", "Groups", "grp"],
  ["l", "Revit Links", "link"],
];

const guide = (c: string) => {
  const d = c === "|" ? "M10.500 0v18" : c === "t" ? "M10.500 0v18M11 10.500h12" : c === "l" ? "M10.500 0v11M11 10.500h10" : c === "." ? "" : c === "_" ? "M10.500 0v6M15 10.500h9" : "M10.500 0v18M15 10.500h7";
  const box = "-_+".includes(c);
  return html`<svg class="ic" width="20" height="18" aria-hidden="true"><path d=${d} stroke="#999" stroke-dasharray="1 1" fill="none"/>
    ${box ? svg`<rect x="6.500" y="6.500" width="8" height="8" fill="#fff" stroke="#8a8a8a"/><path d=${c === "+" ? "M8 10.500h5M10.500 8v5" : "M8 10.500h5"} stroke="#222"/>` : nothing}</svg>`;
};

@customElement("project-browser")
class ProjectBrowser extends LitElement {
  static styles = [base, panelTitle, css`
    :host { display: flex; flex-direction: column; min-height: 0; background: #f0f0f0; }
    .head { padding-right: 3px; }
    ul { flex: 1; margin: 0 2px 1px 0; padding: 1px 0; list-style: none; background: #fdfdfd; border-left: 2px solid #6f6f6f; border-top: 2px solid #6f6f6f; border-right: 1px solid #ccc; overflow: hidden; }
    li { height: 18px; display: flex; align-items: center; white-space: nowrap; margin-left: -2px; }
    .pic { width: 20px; display: flex; justify-content: center; }
    .txt { padding: 0 3px; margin-left: 5px; line-height: 18px; }
    .pic + .txt { margin-left: 1px; }
    .bold { font-weight: 700; background: #e3e0e2; }
  `];
  render() {
    return html`<header class="head"><span>Project Browser - Project1</span><button aria-label="Close">${icon("x")}</button></header>
      <ul>${TREE.map(([cells, label, extra]) => html`<li>
        ${[...cells].map(guide)}
        ${extra && extra !== "bold" ? html`<span class="pic">${icon(extra)}</span>` : nothing}
        <span class=${classMap({ txt: true, bold: extra === "bold" })}>${label}</span></li>`)}</ul>`;
  }
}

/* ---------- drawings ---------- */

const handle = (x: number) => svg`<circle cx=${x + 0.5} cy="282.500" r="3.500" fill="#7b8fbf" stroke="#5a6c9c"/>`;
const dimMark = (x: number) => svg`<path d="M${x - 7}.5 265v10M${x + 6}.5 265v10M${x - 7} 270.500h14M${x - 4} 268l-2.500 2.500 2.500 2.500M${x + 4} 268l2.500 2.500-2.500 2.500" stroke="#2c4a86" fill="none"/>`;

const floorPlan = html`<svg class="draw" aria-label="Floor plan">
  <defs><pattern id="wall" width="14" height="9" patternUnits="userSpaceOnUse"><path d="M2 3l3-3M6 3l3-3M1 6l3 2 3-2" stroke="#222" fill="none"/></pattern></defs>
  <g transform="translate(-246 -225)">
    <path d="M307.500 258v62M395.500 258v42M448.500 258v42M487.500 258v70M304 262.500h94M445 262.500h46" stroke="#a9aee8" fill="none"/>
    <path d="M305 265l5-5M393 265l5-5M446 265l5-5M485 265l5-5" stroke="#8c92dc"/>
    ${handle(307)}${handle(395)}${handle(448)}${handle(487)}${dimMark(351)}${dimMark(468)}
    <text x="350" y="256" class="dim">2964.2</text><text x="467" y="256" class="dim">1318.2</text>
    <text x="280" y="316" class="tiny">10</text><text x="507" y="397" class="tiny">8</text>
    <rect x="240" y="327" width="255" height="8" fill="#fff"/><rect x="240" y="327" width="255" height="8" fill="url(#wall)"/>
    <path d="M246 326.500h250M246 330.500h242" stroke="#000" fill="none"/><path d="M246 335h242" stroke="#000" stroke-width="2"/>
    <rect x="487" y="331" width="8" height="37" fill="#fff"/><path d="M488 340l4-4M491 352l4-4M488 362l4-4" stroke="#222"/>
    <path d="M495.500 326v42M491.500 331v37M487.500 336v32M493.500 331v37" stroke="#000"/>
    <rect x="253.500" y="325.500" width="54" height="10" fill="#fff" stroke="#000"/><path d="M253 329.500h55" stroke="#000" stroke-width="3"/>
    <rect x="486.500" y="367.500" width="10" height="60" fill="#fff" stroke="#000"/><path d="M493 368v60" stroke="#000" stroke-width="3"/>
    <rect x="394" y="326" width="55" height="10" fill="#e3edf9"/><rect x="395.500" y="331.500" width="53" height="4" fill="#8fa3dc" stroke="#20409c"/>
    <path d="M397 306.500v25M446.500 306.500v25" stroke="#1f3fa8" stroke-width="2"/><path d="M398 307q14 1 21 15M446 307q-14 1-21 15M419.500 306v26M423.500 307v24M418 316l4 4 4-10M417 330l8-8" stroke="#20409c" fill="none"/>
  </g></svg>`;

const win = (x: number) => svg`<rect x=${x} y="579" width="22" height="14" fill="#1b8ab4" stroke="#0a0a0a" stroke-width="2"/>`;
const level = (y: number) => svg`<circle cx="399" cy=${y} r="5" fill="#1f3a9c"/><path d="M399 ${y}h5a5 5 0 0 1-5 5z" fill="#dfe4f8"/>`;

const elevation = html`<svg class="draw" aria-label="West elevation"><g transform="translate(-246 -475)">
  <rect x="369.500" y="503.500" width="107" height="102" fill="#714552" stroke="#1a0d12"/>
  <path d="M404 554.500h21M432 554.500h8M448 554.500h20M368 594.500h2" stroke="#1a0d12"/>
  ${win(379)}${win(442)}
  <rect x="409" y="579" width="22" height="26" fill="#b58d58" stroke="#0a0a0a" stroke-width="2"/><path d="M420.500 580v24" stroke="#222"/>
  ${level(554)}${level(605)}
  <rect x="407" y="547" width="18" height="6" fill="#fff"/><rect x="407" y="556" width="12" height="6" fill="#fff"/><rect x="407" y="598" width="18" height="6" fill="#fff"/>
  <text x="408" y="552" class="mini">Level 1</text><text x="407" y="561" class="mini">4000</text><text x="408" y="603" class="mini">Level 0</text><text x="408" y="611" class="mini">0</text>
</g></svg>`;

const threeD = html`<svg class="draw" aria-label="3D model"><g transform="translate(-621 -225)">
  <path d="M621 465l15-4v49l67 79-14-1-68-12z" fill="#707070"/><path d="M626 520l7 0 12 14-7 0z" fill="#fff"/>
  <path d="M636 376L911 312l50 60v26L703 457z" fill="#fff"/>
  <path d="M907 316v89l-52 12z" fill="#808080"/><path d="M907 316l54 63v15l-54 11z" fill="#727272"/>
  <path d="M636 376l67 81v132l-67-79z" fill="#5f5f5f" stroke="#000"/>
  <path d="M703 457l258-60v133L703 589z" fill="#d1d1d1"/>
  <path d="M703.500 457v132l28-6M764 575l142-33M940 535l21-5M703 457l258-60.500M706 452l255-60" stroke="#000" fill="none" stroke-width="1.200"/>
  <path d="M635.500 376.500L911 312.500l50 59M643 379l264-62.500 54 62M643 379l64 75M907.500 316v89" stroke="#000" fill="none" stroke-width="1.200"/>
  <path d="M647 489l14 14v21l-14-12z" fill="#fff" stroke="#000" stroke-width="1.500"/><path d="M648 489v23" stroke="#000" stroke-width="3"/><path d="M649 509l11-6" stroke="#000"/><path d="M646 510l15 13" stroke="#000" stroke-width="4"/>
  <path d="M677 524l14 14v21l-14-13z" fill="#fff" stroke="#000" stroke-width="1.500"/><path d="M678 524v22" stroke="#000" stroke-width="3"/><path d="M679 545l11-7" stroke="#000"/><path d="M676 545l15 14" stroke="#000" stroke-width="4"/>
  <path d="M731 548l34-7v34l-34 7z" fill="#7f9ce0" stroke="#102048"/><path d="M731 548l33-7v33" stroke="#111a30" stroke-width="2.500" fill="none"/><path d="M746.500 546v33M732 581l29-7M743 560h6" stroke="#1f3fb0" fill="none" stroke-width="1.500"/>
  <path d="M818 528l31-7v20l-31 7z" fill="#858585" stroke="#000" stroke-width="2"/><path d="M818 547l31-7" stroke="#000" stroke-width="4"/>
  <path d="M865 517l32-7v19l-32 7z" fill="#858585" stroke="#000" stroke-width="1.200"/><path d="M896 510v20M865 534l32-7" stroke="#000" stroke-width="3"/><path d="M866 537l30-7" stroke="#fff" stroke-dasharray="2 2"/>
  <path d="M906.500 506l33-7v35l-33 6z" fill="#fff" stroke="#000"/><path d="M906 505.500l32-7V534" stroke="#000" stroke-width="2.500" fill="none"/><path d="M921.500 504v34M919 520h5" stroke="#222"/>
  <ellipse cx="916" cy="283" rx="29" ry="14" fill="none" stroke="#dedede" stroke-width="4" stroke-dasharray="14 2"/><ellipse cx="916" cy="281" rx="23" ry="10" fill="#fff" stroke="#e2e2e2"/>
  <path d="M901 255l17-4 15 9-23 6zM901 255l9 11 1 20-8-10zM910 266l23-6-1 21-21 5z" fill="#f1f1f1" stroke="#8f8f8f"/>
  <text x="922" y="276" class="face">BACK</text><text x="917" y="261" class="face">TOP</text>
  <text x="889" y="287" class="face">W</text><text x="940" y="274" class="face">S</text><text x="930" y="296" class="face">E</text>
  <circle class="halo" cx="665" cy="613" r="42"/>
  <path d="M664.500 613v16l4-4 3 6.500 3-1.500-3-6h5z" fill="#fff" stroke="#222"/>
</g></svg>`;

/* ---------- shell ---------- */

const TABS = ["Architecture", "Structure", "Systems", "Insert", "Annotate", "Analyze", "Massing & Site", "Collaborate", "View", "Manage", "Add-Ins"];
const QAT = ["open", "save", "sync", ">", "undo", ">", "redo", ">", "|", "measureS", ">", "alignedS", "tag", "A", "|", "house", ">", "section", "*thin", "|", "closeHid", "switchW", ">", "custom"];
const PLAN_TOOLS = ["sun", "shadowX", "cropX", "crop", "glasses", "bulbS", "frame", "gridSun", "dimLock"];
const SELECT_TOOLS = ["selA", "selB", "selC", "selD", "selE", "filter"];

const ib = (n: string) => html`<button aria-label=${n}>${icon(n)}</button>`;
const arrow = (show = true) => html`<span class="arr">${show ? icon("tri") : nothing}</span>`;

@customElement("app-root")
class AppRoot extends LitElement {
  static styles = [base, css`
    :host { display: flex; flex-direction: column; height: 100vh; min-width: 1180px; overflow: hidden; background: #f0f0f0; }
    .top { display: grid; grid-template-columns: 42px 1fr; grid-template-rows: 24px 20px; background: #9b9b9b; }
    .app { grid-row: 1 / 3; height: 41px; width: 41px; border: 2px solid #111; background: linear-gradient(#f2f2f2, #a8a8a8); z-index: 1; }
    .title { display: flex; margin-left: -42px; padding-left: 42px; background: linear-gradient(#6d92d4, #6f8bcb 90%, #5d6fc0); grid-column: 2; }
    .info { margin-left: auto; width: 457px; display: flex; align-items: center; padding-right: 3px; background: linear-gradient(#dedede, #b9b9b9); }
    .info button { height: 22px; }
    .info .play { width: 12px; }
    .info input { width: 181px; height: 22px; border: 2px solid #222; padding: 0 3px; font: italic 13px Roboto, sans-serif; background: #fff; }
    .info input::placeholder { color: #666; opacity: 1; }
    .i24 { width: 24px; }
    .info .help { margin-left: 10px; }
    .sign { flex: 1; justify-content: flex-start; margin-left: 1px; }
    .arr { width: 12px; display: flex; justify-content: center; flex: none; }
    .caption { width: 122px; display: flex; align-items: flex-start; padding-left: 22px; }
    .caption button { width: 26px; height: 19px; }
    .caption .quit { width: 45px; background: #c04a58; color: #fff; font-size: 15px; font-weight: 700; }
    .dash { width: 8px; height: 2px; background: #1d2434; margin-top: 5px; }
    .tabs { display: flex; align-items: stretch; padding-left: 3px; height: 20px; color: #2c2c2c; background: linear-gradient(#9f9f9f, #949494); }
    .tabs button { padding: 2px 9px 0 10px; }
    .tabs .on { margin: 2px 10px 0 5px; padding: 0 8px; background: linear-gradient(#b4e2a0, #eaf6e4); border: 1px solid #7ec95c; border-bottom: 0; color: #1e1e1e; }
    .tabs .pill { padding: 2px 0 0 8px; gap: 2px; margin-left: 4px; }
    .ribbon { display: flex; height: 96px; flex: none; padding: 0 0 1px 3px; border-top: 1px solid #6cc644; border-bottom: 2px solid #6cc644; background: linear-gradient(#cfdecb, #8d8f8c); }
    .panel { display: flex; flex-direction: column; background: #fdfdfd; border-right: 2px solid #cfcfcf; }
    .body { flex: 1; display: flex; align-items: flex-start; justify-content: center; padding-top: 2px; }
    .cap { height: 18px; background: #ececec; display: flex; align-items: center; justify-content: center; gap: 4px; }
    .green .cap { background: #cfe8c4; }
    .p-select { width: 55px; } .p-props { width: 64px; } .p-clip { width: 80px; } .p-geo { width: 143px; } .p-mod { width: 239px; } .p-view { width: 64px; } .p-meas { width: 56px; } .p-create { width: 83px; margin-right: 3px; border-right: 0; } .p-mode { width: 45px; } .p-host { width: 63px; border-right: 0; }
    .big { flex-direction: column; line-height: 15px; width: 44px; height: 72px; justify-content: flex-start; gap: 8px; padding-top: 8px; }
    .sel { background: #bedcf3; border: 1px solid #3b7fc0; }
    .tall { gap: 5px; padding-top: 4px; width: auto; }
    .stack { display: flex; flex-direction: column; align-items: center; gap: 3px; padding-top: 2px; }
    .stack .sel { width: 38px; height: 35px; }
    .stack .plain { height: 32px; width: 38px; }
    .pastebtn { color: #aaa; width: 50px; padding-top: 3px; gap: 2px; }
    .pastebtn .arr { opacity: .5; }
    .col { display: grid; grid-auto-rows: 24px; align-items: center; }
    .col button { width: 25px; height: 24px; }
    .col .txt { width: 64px; justify-content: flex-start; gap: 4px; padding-left: 4px; }
    .lead { width: 76px; }
    .line { display: flex; align-items: center; }
    .grid4, .grid2 { display: grid; grid-template-columns: repeat(4, 39px); grid-auto-rows: 36px; }
    .grid2 { grid-template-columns: repeat(2, 39px); }
    .grid4 button, .grid2 button { height: 36px; }
    .small3 { display: grid; grid-template-columns: repeat(3, 25px); grid-auto-rows: 24px; margin-left: 2px; }
    .meas { display: grid; grid-template-columns: 38px 12px; grid-auto-rows: 36px; align-items: center; }
    .view3 { display: grid; grid-template-columns: 24px 12px 24px; grid-auto-rows: 24px; align-items: center; justify-items: center; }
    .qat { height: 24px; flex: none; display: flex; align-items: center; padding-left: 5px; background: linear-gradient(#e6e6e6, #b5b5b5); border-top: 1px solid #777; border-bottom: 1px solid #8a8a8a; }
    .qat button { width: 24px; height: 22px; }
    .qat .sep { width: 1px; height: 18px; background: #b4b4b4; margin: 0 3px; }
    .qat .a { font-size: 17px; font-weight: 900; color: #333; }
    .mode { height: 27px; flex: none; display: flex; align-items: center; padding: 0 9px; background: #dbe5d4; border-bottom: 1px solid #d0d0d0; }
    .work { flex: 1; min-height: 0; display: grid; grid-template-columns: 228px 1fr 286px; column-gap: 6px; }
    .desk { display: grid; grid-template-columns: 1fr 1fr; grid-template-rows: 1fr 1fr; gap: 0 1px; padding: 1px 1px 2px; background: #8a9099; border-left: 1px solid #555; border-right: 1px solid #777; margin-bottom: 2px; min-height: 0; }
    .wide { grid-column: 2; grid-row: 1 / 3; }
    .draw { width: 100%; height: 100%; display: block; }
    .nav { position: absolute; right: 0; top: 0; }
    .low { top: 81px; }
    .dim { font: 16px "Liberation Sans", sans-serif; fill: #3550b0; text-anchor: middle; }
    .tiny { font: 9px "Liberation Sans", sans-serif; text-anchor: middle; }
    .mini { font: 700 5px "Liberation Sans", sans-serif; }
    .face { font: 5px "Liberation Sans", sans-serif; text-anchor: middle; fill: #888; }
    .halo { fill: #fbf95c; mix-blend-mode: multiply; }
    .status { height: 24px; flex: none; display: flex; align-items: center; gap: 2px; padding-left: 2px; background: linear-gradient(#e4e4e4, #c9c9c9); border-top: 1px solid #aaa; border-bottom: 1px solid #2b3350; white-space: nowrap; }
    .msg { width: 334px; }
    .status button { width: 26px; height: 20px; }
    .combo { position: relative; display: flex; }
    .combo select { appearance: none; width: 204px; height: 21px; border: 1px solid #ddd; border-radius: 0; background: #fdfdfd; font: inherit; padding: 0 2px; color: #8a8a8a; opacity: 1; }
    .combo .ic { position: absolute; right: 3px; top: 7px; opacity: .45; pointer-events: none; }
    .combo .design { width: 155px; }
    .count { width: 24px; }
    .right { margin-left: auto; display: flex; align-items: center; padding-right: 66px; }
    .right button { width: 25px; }
  `];

  private header() {
    return html`<div class="top">
      <button class="app" aria-label="Application menu">${icon("logo")}${icon("tri")}</button>
      <div class="title">
        <div class="info">
          <button class="play" aria-label="Toggle search">${icon("triR")}</button>
          <input aria-label="Search" placeholder="Type a keyword or phrase" />
          ${["binoc", "dish", "star", "person"].map((n) => html`<button class="i24" aria-label=${n}>${icon(n)}</button>`)}
          <button class="sign">Sign In</button>${arrow()}
          <button class="i24" aria-label="Exchange apps">${icon("exch")}</button>
          <button class="i24 help" aria-label="Help">${icon("help")}</button>${arrow()}
        </div>
        <div class="caption">
          <button aria-label="Minimize"><span class="dash"></span></button>
          <button aria-label="Restore">${icon("restoreW")}</button>
          <button class="quit" aria-label="Close">×</button>
        </div>
      </div>
      <nav class="tabs">
        ${TABS.map((t) => html`<button>${t}</button>`)}
        <button class="on">Modify | Doors</button>
        <button class="pill" aria-label="Minimize ribbon">${icon("pill")}${icon("tri")}</button>
      </nav>
    </div>`;
  }

  private panel(cls: string, cap: unknown, body: unknown) {
    return html`<section class="panel ${cls}"><div class="body">${body}</div><div class="cap">${cap}</div></section>`;
  }

  private ribbon() {
    return html`<div class="ribbon">
      ${this.panel("p-select", html`Select ${icon("tri")}`, html`<button class="big sel">${icon("cursor")}Modify</button>`)}
      ${this.panel("p-props", "Properties", html`<div class="stack"><button class="plain" aria-label="Type properties">${icon("typeProps")}</button><button class="sel" aria-label="Properties">${icon("props")}</button></div>`)}
      ${this.panel("p-clip", "Clipboard", html`<button class="big pastebtn">${icon("paste")}Paste${arrow()}</button><div class="col">${["cut", "copy", "matchType"].map(ib)}</div>`)}
      ${this.panel("p-geo", "Geometry", html`
        <div class="col lead">
          <div class="line"><button class="txt">${icon("notch")}Notch</button>${arrow()}</div>
          <div class="line"><button class="txt">${icon("cutGeo")}Cut</button>${arrow()}</div>
          <div class="line"><button class="txt">${icon("join")}Join</button>${arrow()}</div>
        </div>
        <div class="col">${["cope", "beam", "wallJoin"].map(ib)}</div>
        <div class="col">${["face", "split", "hammer"].map(ib)}</div>
        <div class="col">${arrow(false)}${arrow()}</div>`)}
      ${this.panel("p-mod", "Modify", html`
        <div class="grid4">${["align", "offset", "mirrorPick", "mirrorDraw", "move", "copyObj", "rotate", "trim"].map(ib)}</div>
        <div class="small3">${["splitEl", "splitGap", "unpin", "array", "scale", "pin", "trimOne", "trimMany", "del"].map(ib)}</div>`)}
      ${this.panel("p-view", "View", html`<div class="view3">${ib("bulb")}${arrow()}${ib("ghost")}${ib("brush")}${arrow()}${ib("linework")}${ib("selBox")}</div>`)}
      ${this.panel("p-meas", "Measure", html`<div class="meas">${ib("measure")}${arrow()}${ib("aligned")}${arrow()}</div>`)}
      ${this.panel("p-create", "Create", html`<div class="grid2">${["assembly", "group", "parts", "similar"].map(ib)}</div>`)}
      ${this.panel("p-mode green", "Mode", html`<button class="big tall">${icon("editFamily")}<span>Edit<br />Family</span></button>`)}
      ${this.panel("p-host green", "Host", html`<button class="big tall">${icon("pickHost")}<span>Pick<br />New Host</span></button>`)}
    </div>`;
  }

  render() {
    return html`
      ${this.header()}
      ${this.ribbon()}
      <div class="qat">${QAT.map((q) =>
        q === ">" ? arrow() : q === "|" ? html`<i class="sep"></i>` : q === "A" ? html`<button class="a">A</button>` : q[0] === "*" ? html`<button class="sel" aria-label="Thin lines">${icon(q.slice(1))}</button>` : ib(q))}</div>
      <div class="mode">Modify | Doors</div>
      <main class="work">
        <properties-panel></properties-panel>
        <div class="desk">
          <doc-window active steps heading="Floor Plan: Level 0 - Project1" .tools=${["hatch", "box", ...PLAN_TOOLS]}>${floorPlan}<nav-bar class="nav" flat></nav-bar></doc-window>
          <doc-window class="wide" heading="3D View: {3D} - Project1" .tools=${["hatch", "box", "sun", "shadow", "teapot", "cropX", "crop", "lockHouse", "glasses", "bulbS", "frame", "gridSun", "partial"]}>${threeD}<nav-bar class="nav low"></nav-bar></doc-window>
          <doc-window steps heading="Elevation: West - Project1" .tools=${["blank", "boxBlue", ...PLAN_TOOLS]}>${elevation}<nav-bar class="nav" flat></nav-bar></doc-window>
        </div>
        <project-browser></project-browser>
      </main>
      <footer class="status">
        <span class="msg">Click to select, TAB for alternates, CTRL adds, SHIFT unselects.</span>
        ${ib("workset")}
        <label class="combo"><select aria-label="Workset"></select>${icon("down")}</label>
        ${ib("editable")}<span class="count">:0</span>
        ${ib("optList")}${ib("optGray")}
        <label class="combo"><select class="design" aria-label="Design option"><option>Main Model</option></select>${icon("down")}</label>
        <div class="right">${SELECT_TOOLS.map(ib)}<span>:1</span></div>
      </footer>`;
  }
}
